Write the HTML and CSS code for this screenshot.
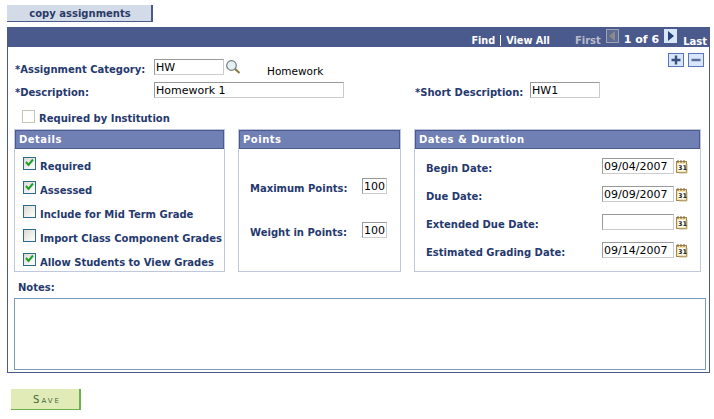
FILE: index.html
```html
<!DOCTYPE html>
<html lang="en">
<head>
    <meta charset="UTF-8">
    <title>Assignment</title>
    <link rel="stylesheet" href="styles.css">
</head>
<body>
    <button class="copy-btn">copy assignments</button>

    <div class="main-box">
        <div class="main-head">
            <span class="head-link">Find</span>
            <span class="head-sep"></span>
            <span class="head-link">View All</span>
            <span class="head-off">First</span>
            <span class="nav-btn off"><svg width="8" height="10" viewBox="0 0 8 10"><path d="M7 0 V10 L1 5 Z" fill="#8a8a8a"/></svg></span>
            <span class="head-count">1 of 6</span>
            <span class="nav-btn"><svg width="8" height="10" viewBox="0 0 8 10"><path d="M1 0 V10 L7 5 Z" fill="#26407a"/></svg></span>
            <span class="last">Last</span>
        </div>

        <div class="form-row row-cat">
            <label class="lbl lbl-first">*Assignment Category:</label>
            <input class="txt w70" value="HW">
            <svg class="lookup" width="15" height="15" viewBox="0 0 15 15">
                <circle cx="5.5" cy="5.5" r="4.8" fill="#e4f0f4" stroke="#70807c" stroke-width="1.2"/>
                <path d="M9 9 L13.5 13" stroke="#8a7a3c" stroke-width="2"/>
            </svg>
            <span class="cat-name">Homework</span>
            <span class="add-btns">
                <span class="small-btn"><svg width="10" height="10" viewBox="0 0 10 10"><path d="M0.5 5 H9.5 M5 0.5 V9.5" stroke="#3a4f80" stroke-width="2.4"/></svg></span>
                <span class="small-btn"><svg width="10" height="10" viewBox="0 0 10 10"><path d="M0.5 5 H9.5" stroke="#5a6c96" stroke-width="2.4"/></svg></span>
            </span>
        </div>

        <div class="form-row row-desc">
            <label class="lbl lbl-first">*Description:</label>
            <input class="txt w190" value="Homework 1">
            <label class="lbl lbl-short">*Short Description:</label>
            <input class="txt w70" value="HW1">
        </div>

        <div class="form-row row-req">
            <span class="cb disabled"></span>
            <label class="lbl">Required by Institution</label>
        </div>

        <div class="panels">
            <section class="panel">
                <h2>Details</h2>
                <div class="check-list">
                    <div class="check-row"><span class="cb on"><svg width="11" height="11" viewBox="0 0 11 11"><path d="M2 4 L4.5 7 L9 1.5" fill="none" stroke="#1f9e2c" stroke-width="2"/></svg></span><label class="lbl">Required</label></div>
                    <div class="check-row"><span class="cb on"><svg width="11" height="11" viewBox="0 0 11 11"><path d="M2 4 L4.5 7 L9 1.5" fill="none" stroke="#1f9e2c" stroke-width="2"/></svg></span><label class="lbl">Assessed</label></div>
                    <div class="check-row"><span class="cb"></span><label class="lbl">Include for Mid Term Grade</label></div>
                    <div class="check-row"><span class="cb"></span><label class="lbl">Import Class Component Grades</label></div>
                    <div class="check-row"><span class="cb on"><svg width="11" height="11" viewBox="0 0 11 11"><path d="M2 4 L4.5 7 L9 1.5" fill="none" stroke="#1f9e2c" stroke-width="2"/></svg></span><label class="lbl">Allow Students to View Grades</label></div>
                </div>
            </section>

            <section class="panel">
                <h2>Points</h2>
                <div class="points-list">
                    <div class="value-row"><label class="lbl">Maximum Points:</label><input class="txt w25" value="100"></div>
                    <div class="value-row"><label class="lbl">Weight in Points:</label><input class="txt w25" value="100"></div>
                </div>
            </section>

            <section class="panel">
                <h2>Dates &amp; Duration</h2>
                <div class="dates-list">
                    <div class="value-row"><label class="lbl">Begin Date:</label><input class="txt w72" value="09/04/2007">
                        <svg class="cal" width="12" height="14" viewBox="0 0 12 14"><rect x="0.5" y="1.5" width="10" height="11" fill="#f4e2a8" stroke="#a08850"/><path d="M2 0 V3 M5 0 V3 M8 0 V3" stroke="#80683c"/><rect x="2" y="4" width="7" height="7" fill="#fff"/><path d="M11 4 V13 H3" fill="none" stroke="#c8b888"/><text x="2" y="10" class="cal-num">31</text></svg></div>
                    <div class="value-row"><label class="lbl">Due Date:</label><input class="txt w72" value="09/09/2007">
                        <svg class="cal" width="12" height="14" viewBox="0 0 12 14"><rect x="0.5" y="1.5" width="10" height="11" fill="#f4e2a8" stroke="#a08850"/><path d="M2 0 V3 M5 0 V3 M8 0 V3" stroke="#80683c"/><rect x="2" y="4" width="7" height="7" fill="#fff"/><path d="M11 4 V13 H3" fill="none" stroke="#c8b888"/><text x="2" y="10" class="cal-num">31</text></svg></div>
                    <div class="value-row"><label class="lbl">Extended Due Date:</label><input class="txt w72" value="">
                        <svg class="cal" width="12" height="14" viewBox="0 0 12 14"><rect x="0.5" y="1.5" width="10" height="11" fill="#f4e2a8" stroke="#a08850"/><path d="M2 0 V3 M5 0 V3 M8 0 V3" stroke="#80683c"/><rect x="2" y="4" width="7" height="7" fill="#fff"/><path d="M11 4 V13 H3" fill="none" stroke="#c8b888"/><text x="2" y="10" class="cal-num">31</text></svg></div>
                    <div class="value-row"><label class="lbl">Estimated Grading Date:</label><input class="txt w72" value="09/14/2007">
                        <svg class="cal" width="12" height="14" viewBox="0 0 12 14"><rect x="0.5" y="1.5" width="10" height="11" fill="#f4e2a8" stroke="#a08850"/><path d="M2 0 V3 M5 0 V3 M8 0 V3" stroke="#80683c"/><rect x="2" y="4" width="7" height="7" fill="#fff"/><path d="M11 4 V13 H3" fill="none" stroke="#c8b888"/><text x="2" y="10" class="cal-num">31</text></svg></div>
                </div>
            </section>
        </div>

        <label class="lbl notes-lbl">Notes:</label>
        <textarea class="notes"></textarea>
    </div>

    <button class="save-btn">Save</button>
</body>
</html>
```

FILE: styles.css
```css
body {
    font-family: "DejaVu Sans", Verdana, sans-serif;
    font-size: 10.5px;
    background-color: #ffffff;
    color: #000000;
    margin: 0;
    padding: 5px 0 0 7px;
}
.cal-num {
    font-family: "DejaVu Sans", sans-serif;
    font-size: 6.5px;
    font-weight: bold;
    fill: #222;
}
.copy-btn {
    display: block;
    width: 146px;
    height: 17px;
    padding: 0 0 0 2px;
    border: none;
    border-right: 2px solid #4a5a8c;
    border-bottom: 1px solid #4a5a8c;
    background-color: #d3dbe8;
    color: #2b3a66;
    font-family: inherit;
    font-size: 10px;
    font-weight: bold;
}
.main-box {
    box-sizing: border-box;
    width: 703px;
    height: 346px;
    margin-top: 5px;
    border: 1px solid #4a5a8c;
    border-top: none;
}
.main-head {
    display: flex;
    align-items: flex-end;
    justify-content: flex-end;
    height: 20px;
    padding: 0 2px 1px 0;
    box-sizing: border-box;
    background-color: #4a5a8c;
    color: #ffffff;
    font-size: 10px;
    font-weight: bold;
}
.head-link {
    font-size: 9.7px;
}
.head-sep {
    width: 1px;
    height: 11px;
    margin: 0 5px;
    background-color: #ffffff;
}
.head-off {
    margin-left: 25px;
    color: #b8bccb;
}
.nav-btn {
    display: flex;
    align-items: center;
    justify-content: center;
    box-sizing: border-box;
    width: 13px;
    height: 14px;
    margin: 0 5px 3px;
    background-color: #d8e6fa;
    border: 1px solid #d8e6fa;
}
.nav-btn.off {
    background-color: #5c6a94;
    border-color: #a0a4b0;
}
.head-count {
    font-size: 11px;
}
.last {
    margin: 0 0 -1px 1px;
}
.add-btns {
    display: flex;
    gap: 4px;
    align-self: flex-start;
    margin: -6px 5px 0 auto;
}
.small-btn {
    display: flex;
    align-items: center;
    justify-content: center;
    box-sizing: border-box;
    width: 16px;
    height: 14px;
    background-color: #d8e6fa;
    border: 1px solid #5c74c0;
}
.lbl {
    font-size: 10px;
    font-weight: bold;
    color: #25396e;
    white-space: nowrap;
}
.txt {
    box-sizing: border-box;
    height: 16px;
    padding: 0 1px;
    border: 1px solid;
    border-color: #999999 #cccccc #cccccc #999999;
    font-family: inherit;
    font-size: 11px;
    color: #000000;
    background-color: #ffffff;
    outline: none;
}
.w25 { width: 25px; }
.w70 { width: 70px; }
.w72 { width: 72px; }
.w190 { width: 190px; }
.form-row {
    display: flex;
    align-items: center;
    height: 16px;
}
.lbl-first {
    width: 146px;
    padding-left: 7px;
    box-sizing: border-box;
    margin-top: 4px;
}
.row-cat {
    margin-top: 12px;
}
.lookup {
    margin: 1px 0 0 2px;
}
.cat-name {
    margin: 7px 0 0 26px;
}
.row-desc {
    margin-top: 7px;
}
.lbl-short {
    margin: 4px 0 0 71px;
    width: 115px;
}
.row-req {
    margin-top: 11px;
    padding-left: 14px;
    height: 14px;
}
.row-req .lbl {
    margin: 5px 0 0 4px;
}
.cb {
    display: flex;
    align-items: center;
    justify-content: center;
    box-sizing: border-box;
    flex: none;
    width: 13px;
    height: 13px;
    border: 1px solid #2f6b8c;
    background: linear-gradient(135deg, #dddbd2, #ffffff);
}
.cb.disabled {
    border-color: #c4c4b4;
    background: #ffffff;
}
.panels {
    display: grid;
    grid-template-columns: 211px 163px 287px;
    column-gap: 13px;
    margin: 6px 0 0 6px;
}
.panel {
    box-sizing: border-box;
    height: 143px;
    border: 1px solid #c0c8dc;
}
.panel h2 {
    box-sizing: border-box;
    height: 19px;
    margin: 0;
    padding: 2px 3px 0;
    background-color: #7080b4;
    border: 1px solid #4a5a8c;
    color: #ffffff;
    font-size: 10px;
    line-height: 14px;
    font-weight: bold;
    letter-spacing: 0.5px;
}
.check-list {
    padding: 8px 0 0 8px;
}
.check-row {
    display: flex;
    align-items: flex-start;
    height: 24px;
}
.check-row .lbl {
    margin: 4px 0 0 4px;
}
.value-row {
    display: flex;
    align-items: center;
    justify-content: space-between;
}
.points-list {
    padding: 29px 13px 0 11px;
}
.points-list .value-row {
    height: 16px;
    margin-bottom: 28px;
}
.points-list .lbl {
    margin-top: 5px;
}
.dates-list {
    padding: 9px 12px 0 11px;
}
.dates-list .value-row {
    height: 16px;
    margin-bottom: 12px;
}
.dates-list .lbl {
    margin: 4px auto 0 0;
}
.cal {
    margin: 2px 0 0 2px;
}
.notes-lbl {
    display: block;
    margin: 9px 0 0 10px;
    height: 17px;
    line-height: 13px;
}
.notes {
    display: block;
    box-sizing: border-box;
    width: 692px;
    height: 72px;
    margin-left: 6px;
    border: 1px solid #7a9cbc;
    resize: none;
}
.save-btn {
    display: block;
    width: 70px;
    height: 21px;
    margin: 16px 0 0 4px;
    padding: 0 0 0 4px;
    border: none;
    border-right: 2px solid #70ac50;
    border-bottom: 1px solid #70ac50;
    background-color: #e0ebb8;
    color: #44683c;
    font-family: inherit;
    font-size: 10px;
    font-variant: small-caps;
    letter-spacing: 2px;
}
```
